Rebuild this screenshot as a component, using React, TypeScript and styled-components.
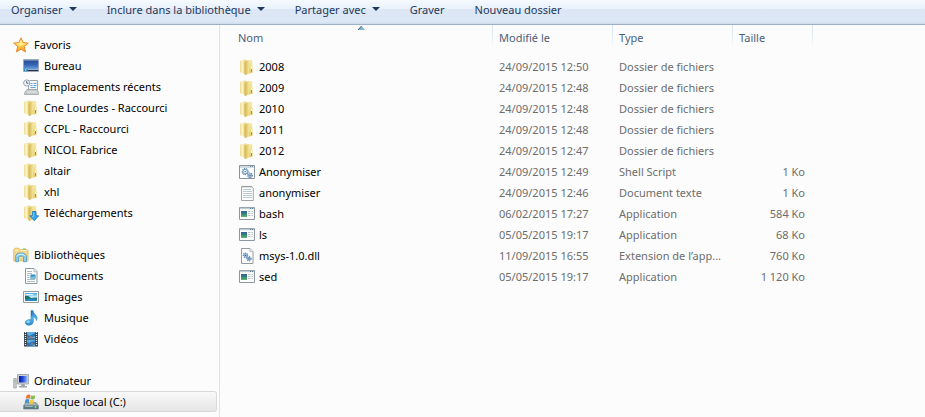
import React from "react";
import styled, { createGlobalStyle, css } from "styled-components";

const GlobalStyle = createGlobalStyle`
  *, *::before, *::after { box-sizing: border-box; }
  body {
    margin: 0;
    background: #fcfcfc;
    color: #000;
    font-family: "Noto Sans", "Open Sans", sans-serif;
    font-size: 11px;
    line-height: 19px;
  }
  button { font: inherit; color: inherit; border: 0; padding: 0; background: none; cursor: default; }
  ul { list-style: none; margin: 0; padding: 0; }
`;

const Window = styled.div`
  display: flex;
  flex-direction: column;
  min-height: 100vh;
`;

const Toolbar = styled.div`
  display: flex;
  align-items: flex-start;
  gap: 30px;
  height: 25px;
  padding-left: 11px;
  border-bottom: 1px solid #a0afc8;
  background: linear-gradient(#f5faff 0, #e8f0fa 9px, #dce6f4 9px, #dde8f6 22px, #cbd9ea 24px);
  color: #1e395b;
`;

const ToolButton = styled.button`
  display: flex;
  align-items: center;
  gap: 6px;
  height: 18px;
  white-space: nowrap;
`;

const Panes = styled.div`
  display: flex;
  flex: 1;
`;

const Sidebar = styled.nav`
  display: flex;
  flex-direction: column;
  flex: 0 0 220px;
  gap: 21px;
  padding: 9px 2px 0 0;
  border-right: 1px solid #d6e5f5;
`;

const NavLink = styled.a<{ $level: 0 | 1; $selected?: boolean }>`
  display: flex;
  align-items: center;
  gap: 5px;
  height: 21px;
  padding-left: ${(p) => (p.$level ? 23 : 13)}px;
  border: 1px solid transparent;
  border-left: 0;
  border-radius: 0 3px 3px 0;
  color: #000;
  text-decoration: none;
  white-space: nowrap;
  ${(p) =>
    p.$selected &&
    css`
      border-color: #d9d9d9;
      background: linear-gradient(#f9f9f9, #e6e6e6);
    `}
`;

const Content = styled.main`
  flex: 1;
  min-width: 0;
`;

const FileTable = styled.table`
  table-layout: fixed;
  width: 593px;
  border-collapse: collapse;
`;

const Col = styled.col<{ $width: number }>`
  width: ${(p) => p.$width}px;
`;

const HeadCell = styled.th<{ $first?: boolean }>`
  position: relative;
  height: 31px;
  padding: 3px 0 0 ${(p) => (p.$first ? 18 : 6)}px;
  vertical-align: top;
  text-align: left;
  font-weight: 400;
  color: #4c607a;
  background: linear-gradient(#d6e5f5, #e1ecf7 12px, #fcfcfc 22px) right top / 1px 22px no-repeat;
`;

const SortMark = styled.svg`
  position: absolute;
  top: 1px;
  left: calc(50% + 1px);
`;

const Cell = styled.td<{ $right?: boolean }>`
  height: 21px;
  padding: 0 8px 0 6px;
  color: #6d6d6d;
  text-align: ${(p) => (p.$right ? "right" : "left")};
  white-space: nowrap;
  overflow: hidden;
  text-overflow: ellipsis;
`;

const NameCell = styled(Cell)`
  padding-left: 19px;
  color: #000;
`;

const FileName = styled.span`
  display: flex;
  align-items: center;
  gap: 4px;
`;

const Icon = styled.svg`
  flex: none;
  width: 16px;
  height: 16px;
`;

type IconName =
  | "star" | "desktop" | "recent" | "folder" | "download" | "library" | "document"
  | "image" | "music" | "video" | "computer" | "disk" | "script" | "text" | "app" | "dll";

const gear = (cx: number, cy: number, r: number) => (
  <g fill="none" stroke="#4f7fae">
    <circle cx={cx} cy={cy} r={r} strokeWidth="1.2" strokeDasharray="1 .8" />
    <circle cx={cx} cy={cy} r={r - 0.7} strokeWidth=".8" fill="#eef5fb" />
    <circle cx={cx} cy={cy} r=".7" fill="#28527e" stroke="none" />
  </g>
);

const folderShape = (
  <>
    <path d="M8 1h4.200q1 0 1 1v4.500l.4.500v7L7.500 14.800Z" fill="url(#fold-right)" />
    <path d="M1 2.500Q1 1.500 2 1.300L6.500.500q1-.1 1 .9v13.300l-5.500-.9q-1-.2-1-1.200Z" fill="url(#fold-left)" />
    <path d="M5.500 3.500q0-.8.700-1.100L9 1.200q1-.3 1 .8v11.500q0 .8-.8 1.200l-2.500 1.200q-1.200.3-1.200-.9Z" fill="url(#fold-front)" />
    <path d="M12.500 10v3" stroke="#3ca6dc" strokeWidth="1" />
    <path d="M12.500 7.500v2.500" stroke="#fff" strokeWidth="1" />
  </>
);

const shapes: Record<IconName, React.ReactNode> = {
  star: (
    <>
      <path d="m8 .8 2.100 4.800 5.200.5-4 3.500 1.300 5.300L8 12.200l-4.600 2.700 1.300-5.300-4-3.500 5.200-.5Z" fill="url(#star-fill)" stroke="#e88a2e" strokeWidth="1" strokeLinejoin="round" />
      <path d="m8 2.800 1.200 3.500 3.200.4L6 10l.3-1-3-2.400 3.300-.4Z" fill="#fff3a5" opacity=".75" />
    </>
  ),
  desktop: (
    <>
      <path d="M.5 1.500h15v12H.5Z" fill="#a9b5c4" stroke="#9aa8ba" />
      <path d="M1 2.500h14v9H1Z" fill="url(#screen)" />
      <path d="M1 12.500h14" stroke="#283347" />
      <circle cx="3" cy="11.500" r="2" fill="#2d92d3" />
      <path d="M2 11.300h1v-1H2Z" fill="#f3603a" />
      <path d="M3.200 11.300h1v-1h-1Z" fill="#b9df63" />
      <path d="M2 12.600h1v-1H2Z" fill="#d8f2ff" />
    </>
  ),
  recent: (
    <>
      <path d="M6.500 1.500h8v9h-9v-4" fill="#f4f8fb" stroke="#a0a6ad" />
      <path d="M7.500 4.500h2m1 0h3m-6 2h2m1 0h3m-6 2h5" stroke="#62a5d9" />
      <path d="M4 10.500h10l1.700 3.500v1.500H1.500V14Z" fill="#c6c8cb" stroke="#9b9ea2" strokeWidth=".7" />
      <path d="M4 13h10" stroke="#eee" />
      <circle cx="3.700" cy="4" r="3.100" fill="#eef4f8" stroke="#9aa3ac" />
      <path d="M3.700 2v2.200H5.500" fill="none" stroke="#4e6e8b" />
    </>
  ),
  folder: folderShape,
  download: (
    <>
      {folderShape}
      <path d="M9.500 6.500h3.500v4.300h2.700L11.300 15.700 6.800 10.800h2.700Z" fill="#39a8ee" stroke="#1973b8" strokeWidth=".8" />
      <path d="M10.300 7.500v4H9" fill="none" stroke="#9bdcff" strokeWidth=".7" />
    </>
  ),
  library: (
    <>
      <path d="M.7 2.500 2 1.200h4l1 1.300h6.500l1.600 1V14H.7Z" fill="#f1d789" stroke="#d5b85e" strokeWidth=".7" />
      <path d="M2 3.500h3m2.500 0h6" stroke="#fff3c1" />
      <path d="M10 2h3" stroke="#7abb67" />
      <path d="M2.700 14.700V10q0-4 5.300-4t5.500 4v4.700h-3V10.500q0-1.500-2.500-1.500t-2.500 1.500v4.200Z" fill="#8bcdeb" stroke="#4d9ac4" strokeWidth=".8" />
      <path d="M3.800 9.500Q4.500 7.200 8 7.200t4.300 2" fill="none" stroke="#dcf4ff" />
    </>
  ),
  document: (
    <>
      <path d="M2.500.5h8.500l3 3v12H2.500Z" fill="#fff" stroke="#919aa3" />
      <path d="M11 .8v3h3" fill="#e7edf1" stroke="#9aa3aa" strokeWidth=".7" />
      <path d="M4 3.500h5m-5 2h5m-5 2h2.500m-2.500 2h2.500m-2.500 2h8m-8 2h8" stroke="#8a9baa" strokeWidth=".7" />
      <path d="M7.500 6.500h5v4h-5Z" fill="#2f83c8" /><path d="M7.500 9q3-2 5 0v1.500h-5Z" fill="#66bdcb" />
    </>
  ),
  image: (
    <>
      <path d="M.5 2.500h15v11H.5Z" fill="#fff" stroke="#959b9f" />
      <path d="M2 4h12v8H2Z" fill="url(#sky)" />
      <path d="M2 7q3-1 6 2L14 8.500v2H2Z" fill="#1d6f62" />
      <path d="M2 10.500q5-2 12-.5v2H2Z" fill="#2886b8" />
      <path d="M3 5.500h7" stroke="#d6f5ff" />
    </>
  ),
  music: (
    <>
      <path d="M8 .5h2q.3 2.800 2.700 4.500 2.500 2.500.8 5.500-.2-2.900-3.200-3.500V12q-.3 3-4 3.300-4.300-.1-4.100-3.100.7-2.900 5.800-2.600Z" fill="url(#note)" stroke="#3d91c8" strokeWidth=".6" />
      <ellipse cx="5.200" cy="11.800" rx="1.900" ry="1.200" fill="#8fd3f5" />
      <path d="M8.700 1.500V6" stroke="#2762a0" strokeWidth=".8" />
    </>
  ),
  video: (
    <>
      <path d="M1 1h14v14.500H1Z" fill="#38434c" />
      <path d="M4 1h8v6.500H4Z" fill="#59b1e6" /><path d="M4 8.500h8v7H4Z" fill="#55abe2" />
      <path d="m4 3 2 2 2-1 4-2v3l-3 1.500H4Zm0 8 2 1 2-1 4-1v3l-3 2H4Z" fill="#2d73b0" />
      <path d="m6 6.500 2-1.500 3 1.500Zm1 7 2-1.500 2 1.500Z" fill="#d9775a" />
      <path d="M2.500 1v14m11-14v14" stroke="#e6edf2" strokeWidth="1.300" strokeDasharray="1 1" />
    </>
  ),
  computer: (
    <>
      <path d="M.7 5.500h2.600V15H.7Z" fill="#c5ccd0" stroke="#9ba3a7" strokeWidth=".7" />
      <path d="M2 7v2" stroke="#75c65f" />
      <path d="M4.500 1.500h11v9.500h-11Z" fill="#cdd1d5" stroke="#a5aaad" />
      <path d="M6 3h8v6.500H6Z" fill="url(#blue-screen)" />
      <path d="M8.500 11h3l.5 2h2v1.500H6V13h2Z" fill="#9fa6ab" />
    </>
  ),
  disk: (
    <>
      <path d="M3 8.500h10l2.500 3v3.500H.5v-3.500Z" fill="#a3afb4" stroke="#78878d" strokeWidth=".7" />
      <path d="M1 11.500h14v3.500H1Z" fill="#5a7983" /><path d="M2 12.500h8" stroke="#9ab6be" />
      <path d="M12.500 12v2" stroke="#79ee68" strokeWidth="1.500" />
      <path d="M3.600 1.200Q6-.3 7.500 1.100L6.700 4.700Q4.800 3.700 2.700 4.700Z" fill="#ed7038" />
      <path d="M8.200 1.400q2 1 4.200-.2l-1 3.700q-2 1-4.100-.1Z" fill="#83bd45" />
      <path d="M2.500 5.400q2-1 4 0l-.9 3.800q-2-1.200-4 0Z" fill="#3e93d2" />
      <path d="M7.100 5.700q2 1 4.100 0l-.9 3.700q-2 1.200-4.100 0Z" fill="#f4c63f" />
    </>
  ),
  script: (
    <>
      <path d="M.5 1.500h15v13H.5Z" fill="#fff" stroke="#8a949e" />
      <path d="M1 3h14" stroke="#c5cfd8" strokeWidth="1.500" />
      <path d="M11 2.500h1m1 0h1" stroke="#5c8fae" />
      {gear(6.2, 7.6, 3)}{gear(11, 11.4, 2.3)}
    </>
  ),
  text: (
    <>
      <path d="M2.500 1.500h10l1.800 2v12H2.500Z" fill="#fff" stroke="#a0a5a9" />
      <path d="M4 4.500h8m-8 2h9m-9 2h9m-9 2h9m-9 2h9" stroke="#b9c9cf" />
      <path d="M4 .8v2m2-2v2m2-2v2m2-2v2m2-2v2" stroke="#89959b" strokeWidth=".7" />
    </>
  ),
  app: (
    <>
      <path d="M.5 1.500h15v12H.5Z" fill="#fff" stroke="#8e979f" />
      <path d="M1 2.500h14" stroke="#c0cbd3" strokeWidth="1.500" /><path d="M11 2.500h1m1 0h1" stroke="#4b88a0" />
      <path d="M2 5h6v6H2Z" fill="url(#app-fill)" />
      <path d="M9 5.500h2.500m-2.500 2h2.500m-2.500 2h2.500m1-4h1.500m-1.500 2h1.500m-1.500 2h1.500" stroke="#b7c1c9" />
    </>
  ),
  dll: (
    <>
      <path d="M2.500.5H11l3 3v12H2.500Z" fill="#fff" stroke="#929ba3" />
      <path d="M11 .7v3h3" fill="#edf1f3" stroke="#a1a8ac" strokeWidth=".7" />
      {gear(6.5, 7.2, 2.2)}{gear(10, 10.7, 2.1)}
    </>
  ),
};

const Glyph = ({ name }: { name: IconName }) => (
  <Icon viewBox="0 0 16 16" aria-hidden="true">{shapes[name]}</Icon>
);

const Gradient = ({ id, stops, flat }: { id: string; stops: string[]; flat?: boolean }) => (
  <linearGradient id={id} x2={flat ? "1" : "0"} y2={flat ? "0" : "1"}>
    {stops.map((c, i) => <stop key={i} offset={i / (stops.length - 1)} stopColor={c} />)}
  </linearGradient>
);

const Defs = styled.svg`
  position: absolute;
  width: 0;
  height: 0;
`;

const IconDefs = () => (
  <Defs aria-hidden="true">
    <defs>
      <Gradient id="fold-right" stops={["#f5eaaa", "#f0de8c", "#e6cd70"]} />
      <Gradient id="fold-front" flat stops={["#d2b252", "#e2ca70", "#f3e5a0"]} />
      <Gradient id="fold-left" flat stops={["#ecd98c", "#fbf5cc", "#efdf90", "#e6d074"]} />
      <Gradient id="star-fill" stops={["#ffe889", "#ffd146", "#f79b2e"]} />
      <Gradient id="screen" stops={["#264d97", "#3766b7", "#73a5df"]} />
      <Gradient id="sky" stops={["#46a7e3", "#d3f1fa", "#60b5d6"]} />
      <Gradient id="note" stops={["#2874b9", "#54b5e8", "#2c85c8"]} />
      <Gradient id="blue-screen" flat stops={["#0818a3", "#224be0", "#8ab4ff"]} />
      <Gradient id="app-fill" stops={["#355d9e", "#35877e", "#63b669"]} />
    </defs>
  </Defs>
);

const Arrow = () => (
  <svg width="8" height="4" viewBox="0 0 8 4" aria-hidden="true"><path d="M0 0h8L4 4Z" fill="#1e395b" /></svg>
);

const commands = [
  { label: "Organiser", menu: true },
  { label: "Inclure dans la bibliothèque", menu: true },
  { label: "Partager avec", menu: true },
  { label: "Graver" },
  { label: "Nouveau dossier" },
];

type Place = { label: string; icon: IconName; selected?: boolean };
const groups: { root: Place; items: Place[] }[] = [
  {
    root: { label: "Favoris", icon: "star" },
    items: [
      { label: "Bureau", icon: "desktop" },
      { label: "Emplacements récents", icon: "recent" },
      { label: "Cne Lourdes - Raccourci", icon: "folder" },
      { label: "CCPL - Raccourci", icon: "folder" },
      { label: "NICOL Fabrice", icon: "folder" },
      { label: "altair", icon: "folder" },
      { label: "xhl", icon: "folder" },
      { label: "Téléchargements", icon: "download" },
    ],
  },
  {
    root: { label: "Bibliothèques", icon: "library" },
    items: [
      { label: "Documents", icon: "document" },
      { label: "Images", icon: "image" },
      { label: "Musique", icon: "music" },
      { label: "Vidéos", icon: "video" },
    ],
  },
  {
    root: { label: "Ordinateur", icon: "computer" },
    items: [{ label: "Disque local (C:)", icon: "disk", selected: true }],
  },
];

const files: [IconName, string, string, string, string][] = [
  ["folder", "2008", "24/09/2015 12:50", "Dossier de fichiers", ""],
  ["folder", "2009", "24/09/2015 12:48", "Dossier de fichiers", ""],
  ["folder", "2010", "24/09/2015 12:48", "Dossier de fichiers", ""],
  ["folder", "2011", "24/09/2015 12:48", "Dossier de fichiers", ""],
  ["folder", "2012", "24/09/2015 12:47", "Dossier de fichiers", ""],
  ["script", "Anonymiser", "24/09/2015 12:49", "Shell Script", "1 Ko"],
  ["text", "anonymiser", "24/09/2015 12:46", "Document texte", "1 Ko"],
  ["app", "bash", "06/02/2015 17:27", "Application", "584 Ko"],
  ["app", "ls", "05/05/2015 19:17", "Application", "68 Ko"],
  ["dll", "msys-1.0.dll", "11/09/2015 16:55", "Extension de l’app...", "760 Ko"],
  ["app", "sed", "05/05/2015 19:17", "Application", "1 120 Ko"],
];

const PlaceLink = ({ place, level }: { place: Place; level: 0 | 1 }) => (
  <NavLink href="#" $level={level} $selected={place.selected} aria-current={place.selected ? "page" : undefined}>
    <Glyph name={place.icon} />
    {place.label}
  </NavLink>
);

export default function App() {
  return (
    <Window>
      <GlobalStyle />
      <IconDefs />
      <Toolbar role="toolbar">
        {commands.map((c) => (
          <ToolButton key={c.label} type="button" aria-haspopup={c.menu ? "menu" : undefined}>
            {c.label}
            {c.menu && <Arrow />}
          </ToolButton>
        ))}
      </Toolbar>
      <Panes>
        <Sidebar>
          {groups.map((g) => (
            <div key={g.root.label}>
              <PlaceLink place={g.root} level={0} />
              <ul>
                {g.items.map((p) => (
                  <li key={p.label}><PlaceLink place={p} level={1} /></li>
                ))}
              </ul>
            </div>
          ))}
        </Sidebar>
        <Content>
          <FileTable>
            <colgroup>
              <Col $width={273} /><Col $width={120} /><Col $width={120} /><Col $width={80} />
            </colgroup>
            <thead>
              <tr>
                <HeadCell $first scope="col" aria-sort="ascending">
                  <button type="button">Nom</button>
                  <SortMark width="7" height="4" viewBox="0 0 7 4" aria-hidden="true">
                    <path d="M0 4 3.500 0 7 4Z" fill="#7ab5d3" />
                    <path d="M0 4 3.500 0" stroke="#3c5e72" fill="none" />
                  </SortMark>
                </HeadCell>
                <HeadCell scope="col"><button type="button">Modifié le</button></HeadCell>
                <HeadCell scope="col"><button type="button">Type</button></HeadCell>
                <HeadCell scope="col"><button type="button">Taille</button></HeadCell>
              </tr>
            </thead>
            <tbody>
              {files.map(([icon, name, date, type, size]) => (
                <tr key={name}>
                  <NameCell><FileName><Glyph name={icon} />{name}</FileName></NameCell>
                  <Cell>{date}</Cell>
                  <Cell>{type}</Cell>
                  <Cell $right>{size}</Cell>
                </tr>
              ))}
            </tbody>
          </FileTable>
        </Content>
      </Panes>
    </Window>
  );
}
